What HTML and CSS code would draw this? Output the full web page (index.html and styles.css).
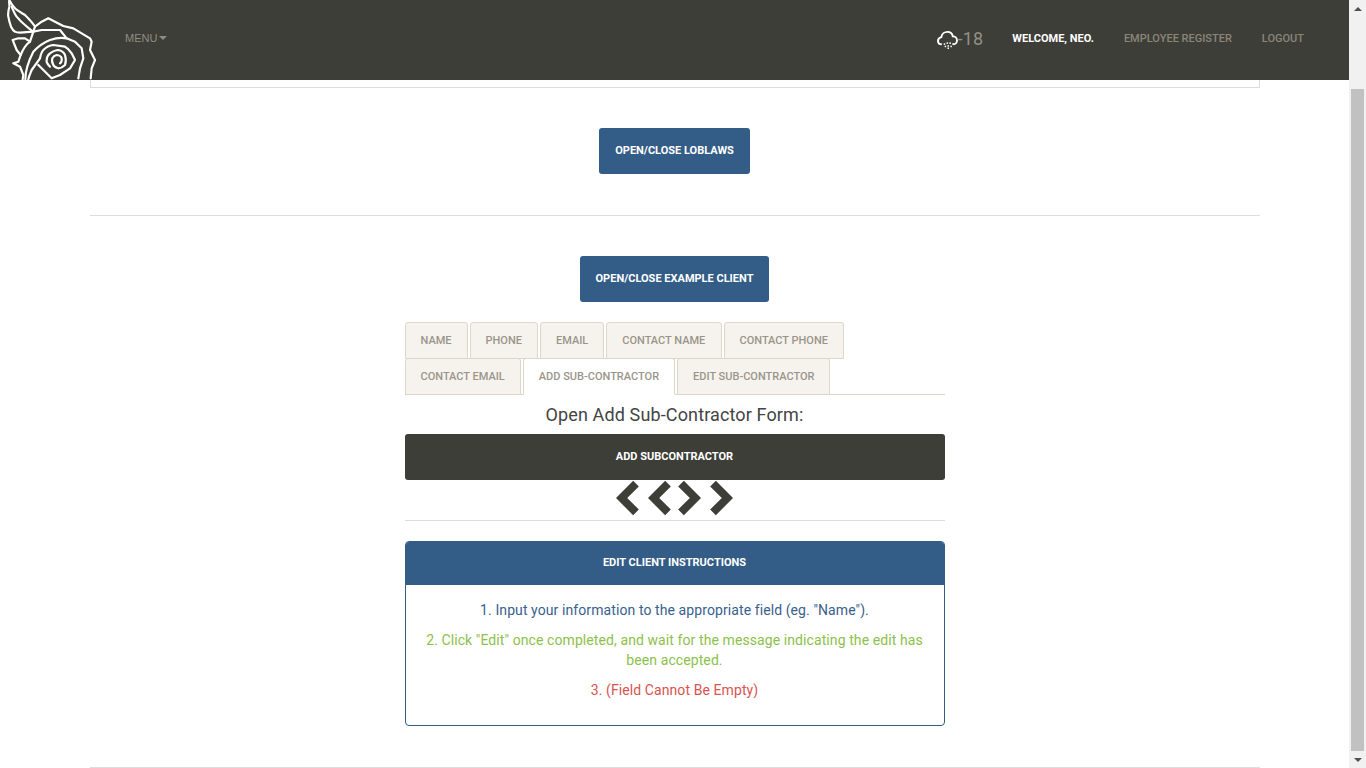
FILE: index.html
```html
<!DOCTYPE html>
<html lang="en">
<head>
<meta charset="utf-8">
<title>Clients</title>
<link rel="stylesheet" href="styles.css">
</head>
<body>
<div class="page">
  <div class="viewport">
    <header class="topbar">
      <div class="topbar-left">
        <svg class="logo" width="100" height="80" viewBox="0 0 300 240" fill="none" stroke="#fff" stroke-width="6.5" stroke-linejoin="round" stroke-linecap="round">
          <path d="M28 0C26 8 29 14 28 20C25 32 23 42 25 50C27 62 30 72 33 80C37 88 41 93 45 95C50 98 55 98 60 98L100 95L105 80C100 72 90 60 75 45C62 37 52 32 45 25C38 18 32 8 28 0Z"/>
          <path d="M35 20C40 32 44 42 50 50C58 60 66 68 75 75C84 83 92 90 100 95"/>
          <path d="M105 80L125 65L145 55L165 65L190 78L220 85L245 100L270 115L275 125L270 150L285 180L275 205L272 235"/>
          <path d="M100 95L125 90L165 90L180 90L200 115L225 125L245 145L250 175L240 205L235 235"/>
          <path d="M100 95L90 125L75 115L55 115L38 120L50 150L62 165L55 185L40 190L60 200L70 225L68 238"/>
          <path d="M76 238C76 220 82 190 100 155C112 142 130 128 150 120C170 113 185 112 200 115"/>
          <path d="M62 165C68 150 76 135 90 125"/>
          <path d="M85 238C88 225 92 218 95 210L120 175C122 165 125 155 130 150C140 140 150 136 160 135L195 140C205 145 210 152 215 160L225 180L210 205L180 225L155 235L130 210L115 195"/>
          <path d="M150 200C142 192 138 186 140 180C140 170 145 164 150 160C160 153 168 150 175 150C185 152 192 158 195 165C198 175 198 187 195 195C188 202 182 205 175 205C168 203 162 200 160 195C156 187 155 180 157 175C160 169 165 166 170 165C178 166 184 170 185 175C186 182 184 187 180 190"/>
        </svg>
        <span class="menu">MENU<span class="caret"></span></span>
      </div>
      <nav class="topbar-right">
        <span class="weather">
          <svg class="cloud" width="21" height="19" viewBox="0 0 22 20" fill="none" stroke="#fff" stroke-width="2">
            <path d="M5 15C2.5 15 1 13.5 1 11.5C1 9.5 2.5 8 4.5 7.5C5 4 8 2 11 2C14 2 16 4 16.5 6.5C19 6.5 21 8.5 21 11C21 13 19.5 15 17 15"/>
            <g class="snow"><rect x="7" y="14" width="1.6" height="1.6"/><rect x="10" y="13" width="1.6" height="1.6"/><rect x="13" y="13" width="1.6" height="1.6"/><rect x="16" y="14" width="1.6" height="1.6"/><rect x="8" y="16.5" width="1.6" height="1.6"/><rect x="11" y="16" width="1.6" height="1.6"/><rect x="14" y="16.5" width="1.6" height="1.6"/><rect x="11" y="18.4" width="1.6" height="1.6"/></g>
          </svg>
          <span class="temp">-18</span>
        </span>
        <a class="nav-link nav-active">Welcome, Neo.</a>
        <a class="nav-link">Employee Register</a>
        <a class="nav-link">Logout</a>
      </nav>
    </header>
    <main class="container">
      <div class="well"></div>
      <section class="client">
        <button class="btn btn-blue">Open/Close Loblaws</button>
      </section>
      <hr class="rule">
      <section class="client">
        <button class="btn btn-blue">Open/Close Example Client</button>
        <div class="column">
          <ul class="tabs">
            <li class="tab">Name</li>
            <li class="tab">Phone</li>
            <li class="tab">Email</li>
            <li class="tab">Contact Name</li>
            <li class="tab">Contact Phone</li>
            <li class="tab">Contact Email</li>
            <li class="tab tab-active">Add Sub-Contractor</li>
            <li class="tab">Edit Sub-Contractor</li>
          </ul>
          <h3 class="form-title">Open Add Sub-Contractor Form:</h3>
          <button class="btn btn-dark">Add Subcontractor</button>
          <div class="chevrons">
            <svg class="chev" width="23" height="36" viewBox="0 0 23 36"><path d="M20 3.6L5.6 18L20 32.4"/></svg>
            <svg class="chev chev-near" width="23" height="36" viewBox="0 0 23 36"><path d="M20 3.6L5.6 18L20 32.4"/></svg>
            <svg class="chev" width="23" height="36" viewBox="0 0 23 36"><path d="M3 3.6L17.4 18L3 32.4"/></svg>
            <svg class="chev chev-far" width="23" height="36" viewBox="0 0 23 36"><path d="M3 3.6L17.4 18L3 32.4"/></svg>
          </div>
          <hr class="rule rule-inner">
          <div class="panel">
            <div class="panel-head">Edit Client Instructions</div>
            <div class="panel-body">
              <p class="step step-blue">1. Input your information to the appropriate field (eg. "Name").</p>
              <p class="step step-green">2. Click "Edit" once completed, and wait for the message indicating the edit has been accepted.</p>
              <p class="step step-red">3. (Field Cannot Be Empty)</p>
            </div>
          </div>
        </div>
      </section>
      <hr class="rule rule-end">
    </main>
  </div>
  <aside class="scrollbar">
    <div class="arrow-btn"><span class="arrow-up"></span></div>
    <div class="thumb-track"><div class="thumb"></div></div>
    <div class="arrow-btn"><span class="arrow-down"></span></div>
  </aside>
</div>
</body>
</html>
```
FILE: styles.css
```css
* { box-sizing: border-box; }
html, body { margin: 0; height: 100%; overflow: hidden; background: #fff; }
body { font-family: Roboto, "Liberation Sans", sans-serif; font-size: 14px; line-height: 20px; color: #3e3e38; }
.page { display: flex; height: 768px; overflow: hidden; }
.viewport { position: relative; flex: 1; min-width: 0; overflow: hidden; }

.topbar { position: absolute; top: 0; left: 0; right: 0; height: 80px; background: #3e3e38; display: flex; justify-content: space-between; align-items: center; padding-right: 45px; z-index: 5; }
.topbar-left { display: flex; align-items: center; height: 80px; }
.logo { display: block; flex: none; }
.menu { margin-left: 25px; font-family: "Liberation Sans", sans-serif; font-size: 11px; color: #8f8d80; display: inline-flex; align-items: center; margin-top: -4px; }
.caret { width: 0; height: 0; margin-left: 2px; border-left: 4px solid transparent; border-right: 4px solid transparent; border-top: 4px solid #8f8d80; }
.topbar-right { display: flex; align-items: center; margin-top: -3px; }
.weather { display: flex; align-items: center; margin-right: 29px; }
.cloud { display: block; margin-top: 1px; }
.snow { fill: #fff; stroke: none; }
.temp { font-size: 18px; line-height: 20px; color: #938f84; letter-spacing: .2px; }
.nav-link { font-size: 11px; font-weight: 500; text-transform: uppercase; color: #8a867b; margin-left: 30px; }
.weather + .nav-link { margin-left: 0; }
.nav-active { color: #fff; font-weight: 700; }

.container { width: 1170px; margin: 0 auto; }
.well { height: 88px; border: 1px solid #ddd; border-top: 0; }
.client { display: flex; flex-direction: column; align-items: center; }
.well + .client { padding: 40px 0 41px; }
.rule { margin: 0; border: 0; border-top: 1px solid #ddd; }
.rule + .client { padding-top: 40px; }
.rule-inner { width: 100%; margin-top: 4px; }
.rule-end { margin-top: 41px; }

.btn { display: block; height: 46px; padding: 0 16px; border: 0; border-radius: 3px; color: #fff; font: 700 11px/46px Roboto, sans-serif; text-transform: uppercase; }
.btn-blue { background: #335d87; }
.btn-dark { background: #3e3e38; width: 100%; }

.column { width: 540px; margin-top: 20px; }
.tabs { display: flex; flex-wrap: wrap; margin: 0; padding: 0; list-style: none; border-bottom: 1px solid #ddd6c9; height: 73px; }
.tab { height: 37px; margin: 0 2px -1px 0; padding: 0 15px; background: #f6f3ee; border: 1px solid #ddd6c9; border-radius: 3px 3px 0 0; font-size: 11px; font-weight: 500; line-height: 35px; text-transform: uppercase; color: #9a958a; }
.tab:nth-child(4) { padding-right: 15.6px; }
.tab:nth-child(5) { padding-left: 14.6px; padding-right: 14.8px; }
.tab:nth-child(8) { padding-right: 14.4px; }
.tab-active { background: #fff; border-bottom-color: #fff; }
.form-title { margin: 10px 0 9px; font-size: 18px; font-weight: 400; line-height: 20px; text-align: center; letter-spacing: .13px; color: #444; }
.chevrons { display: flex; justify-content: center; height: 36px; }
.chev { display: block; fill: none; stroke: #3e3e38; stroke-width: 8; }
.chev + .chev { margin-left: 9px; }
.chev-near + .chev { margin-left: 7px; }

.panel { margin-top: 20px; height: 185px; border: 1px solid #335d87; border-radius: 4px; overflow: hidden; }
.panel-head { height: 43px; background: #335d87; color: #fff; font-size: 11px; font-weight: 700; line-height: 41px; text-align: center; text-transform: uppercase; }
.panel-body { padding: 15px 20px; text-align: center; }
.step { margin: 0 0 10px; letter-spacing: .09px; }
.step-blue { color: #38618c; }
.step-green { color: #8cc14c; }
.step-red { color: #d9534f; }

.scrollbar { flex: none; width: 17px; background: #f1f1f1; display: flex; flex-direction: column; }
.arrow-btn { flex: none; height: 17px; display: flex; align-items: center; justify-content: center; }
.arrow-up { width: 0; height: 0; border-left: 4px solid transparent; border-right: 4px solid transparent; border-bottom: 4px solid #505050; }
.arrow-down { width: 0; height: 0; border-left: 4px solid transparent; border-right: 4px solid transparent; border-top: 4px solid #505050; }
.thumb-track { flex: 1; padding: 72px 2px 0; }
.thumb { height: 100%; background: #c1c1c1; }
```
